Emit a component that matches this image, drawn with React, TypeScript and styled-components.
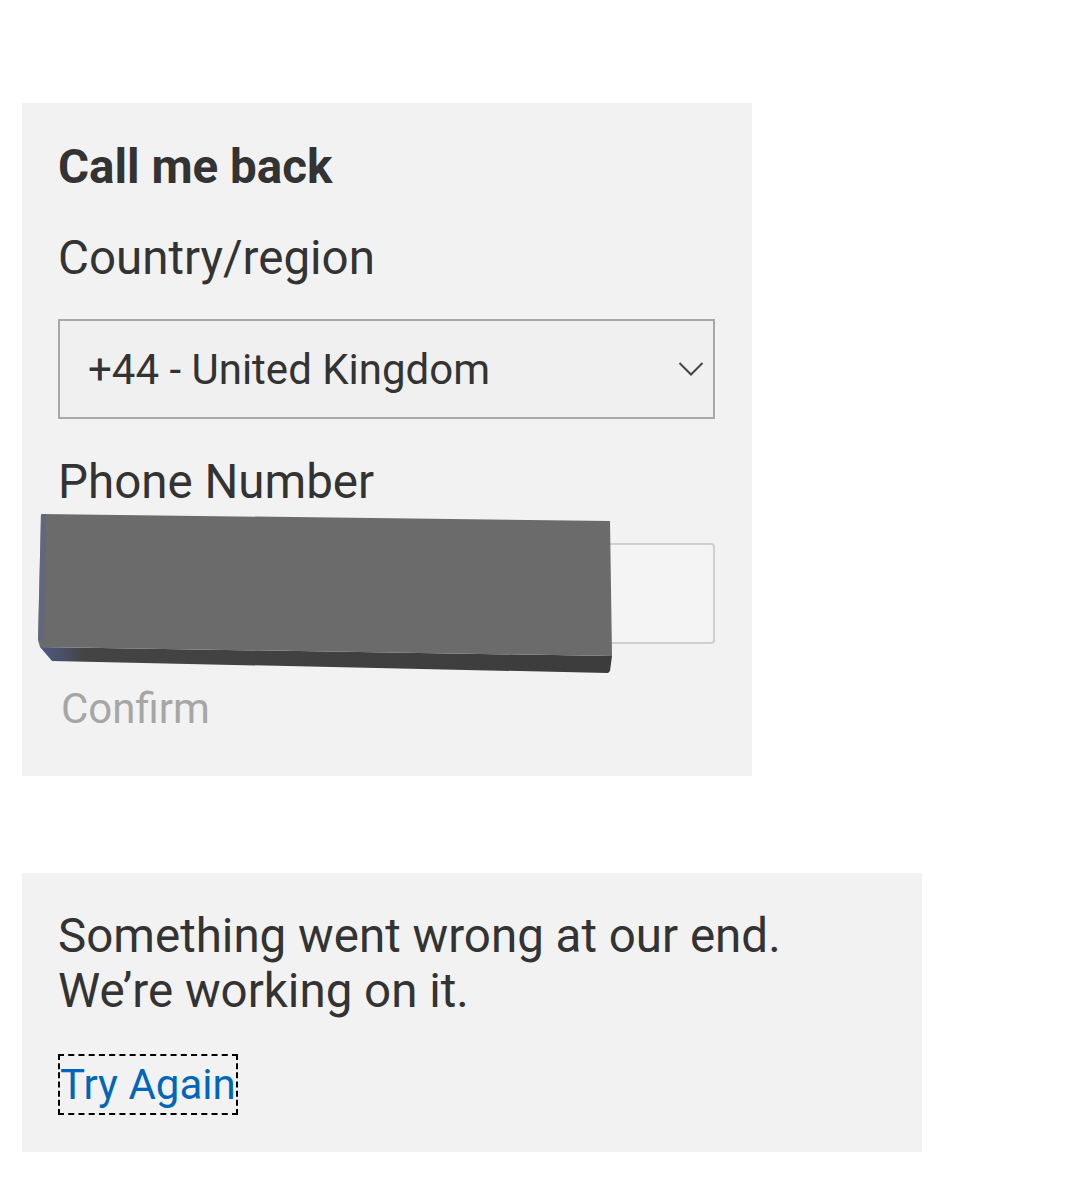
import { useState } from "react";
import styled, { createGlobalStyle } from "styled-components";

const GlobalStyle = createGlobalStyle`
  html, body {
    margin: 0;
    padding: 0;
    background: #fff;
  }
  body {
    font-family: Roboto, "Liberation Sans", Arial, sans-serif;
    color: #333;
  }
`;

const Page = styled.div`
  display: flex;
  flex-direction: column;
  align-items: flex-start;
  gap: 97px;
  padding: 103px 0 40px 22px;
`;

const Panel = styled.section<{ $width: number; $top: number; $bottom: number }>`
  width: ${({ $width }) => $width}px;
  box-sizing: border-box;
  background: #f2f2f2;
  display: flex;
  flex-direction: column;
  align-items: flex-start;
  padding: ${({ $top, $bottom }) => `${$top}px 36px ${$bottom}px`};
`;

const Title = styled.h2`
  margin: 0 0 35px;
  font-size: 47.5px;
  line-height: 56px;
  font-weight: 700;
  color: #333;
`;

const Label = styled.label<{ $gap: number }>`
  display: block;
  font-size: 47.5px;
  line-height: 56px;
  font-weight: 400;
  color: #333;
  margin-bottom: ${({ $gap }) => $gap}px;
`;

const SelectBox = styled.div`
  width: 657px;
  height: 100px;
  box-sizing: border-box;
  border: 2px solid #a8a8a8;
  background: #f0f0f0;
  display: flex;
  align-items: center;
  justify-content: space-between;
  padding: 0 9px 0 28px;
  font-size: 42px;
  color: #333;
  margin-bottom: 35px;
  cursor: pointer;
`;

const FieldWrap = styled.div`
  position: relative;
  width: 657px;
  margin-bottom: 40px;
`;

const PhoneInput = styled.input`
  display: block;
  width: 100%;
  height: 101px;
  box-sizing: border-box;
  border: 2px solid #cfcfcf;
  border-radius: 4px;
  background: #f4f4f4;
  font: inherit;
  font-size: 42px;
  padding: 0 28px;
  outline: none;
`;

const Redaction = styled.svg`
  position: absolute;
  left: -20px;
  top: -31px;
  pointer-events: none;
`;

const ConfirmButton = styled.button`
  background: none;
  border: none;
  padding: 0 3px;
  font-family: inherit;
  font-size: 42px;
  line-height: 50px;
  color: #a6a6a6;
  cursor: default;
`;

const Message = styled.p`
  margin: 0 0 37px;
  font-size: 47.5px;
  line-height: 55px;
  color: #333;
`;

const RetryLink = styled.a`
  display: inline-block;
  margin-left: 2px;
  font-size: 42px;
  line-height: 57px;
  color: #0067b8;
  text-decoration: none;
  outline: 2px dashed #000;
  cursor: pointer;
`;

const Chevron = () => (
  <svg width="26" height="16" viewBox="0 0 26 16">
    <path d="M1.5 2 L13 13.5 L24.5 2" fill="none" stroke="#444" strokeWidth="2" />
  </svg>
);

export default function App() {
  const [phone, setPhone] = useState("");

  return (
    <>
      <GlobalStyle />
      <Page>
        <Panel $width={730} $top={36} $bottom={42}>
          <Title>Call me back</Title>
          <Label $gap={33}>Country/region</Label>
          <SelectBox role="combobox" aria-label="Country/region">
            <span>+44 - United Kingdom</span>
            <Chevron />
          </SelectBox>
          <Label $gap={33}>Phone Number</Label>
          <FieldWrap>
            <PhoneInput value={phone} onChange={(e) => setPhone(e.target.value)} aria-label="Phone Number" />
            <Redaction width="580" height="164" viewBox="0 0 580 164">
              <defs>
                <linearGradient id="edge" x1="0" y1="0" x2="1" y2="0">
                  <stop offset="0" stopColor="#4f5a86" />
                  <stop offset="0.08" stopColor="#444" />
                  <stop offset="1" stopColor="#3c3c3c" />
                </linearGradient>
              </defs>
              <polygon points="2,135 574,144 572,159 570,161 14,149" fill="url(#edge)" />
              <polygon points="3,2 572,9 574,144 2,135 0,128" fill="#6b6b6b" />
              <polygon points="3,2 8,2 6,130 0,128" fill="#5b6488" opacity="0.6" />
            </Redaction>
          </FieldWrap>
          <ConfirmButton disabled>Confirm</ConfirmButton>
        </Panel>

        <Panel $width={900} $top={36} $bottom={39}>
          <Message>
            Something went wrong at our end.
            <br />
            We’re working on it.
          </Message>
          <RetryLink href="#" onClick={(e) => e.preventDefault()}>
            Try Again
          </RetryLink>
        </Panel>
      </Page>
    </>
  );
}
